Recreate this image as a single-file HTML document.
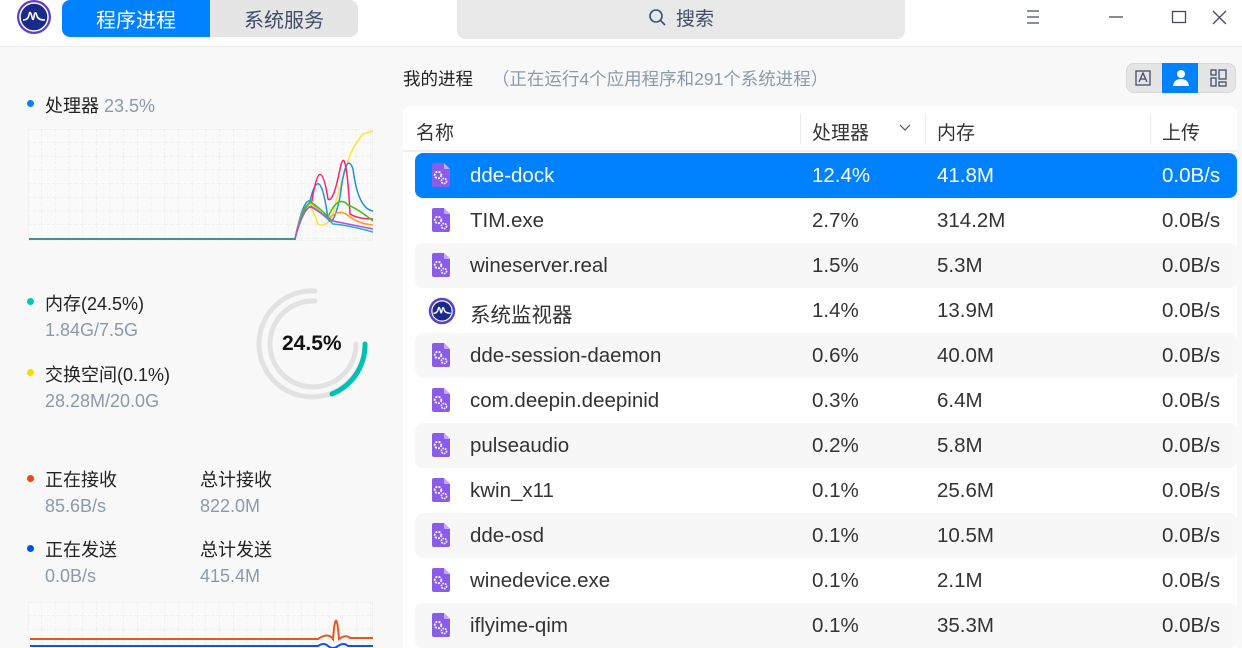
<!DOCTYPE html>
<html><head><meta charset="utf-8"><style>
*{margin:0;padding:0;box-sizing:border-box}
body{width:1242px;height:648px;overflow:hidden;background:#f8f8f8;font-family:"Liberation Sans","Noto Sans CJK SC",sans-serif;position:relative;color:#2a2a2a}
.abs{position:absolute}
.title{left:0;top:0;width:1242px;height:47px;background:#fff;border-bottom:1px solid #eaeaea}
.tab{top:0;height:37px;font-size:20px;display:flex;align-items:center;justify-content:center}
.dot{width:7px;height:7px;border-radius:50%;position:absolute}
.lbl{font-size:18px;color:#222}
.sub{font-size:18px;color:#8a9aab}
.row{position:absolute;left:415px;width:822px;height:45px;font-size:20.5px;color:#333}
.row span{position:absolute;top:11px}
.row.g{background:#f7f7f7;border-radius:8px}
.row.sel{background:#0081ff;color:#fff;border-radius:8px}
.ic{position:absolute;left:15px;top:10px}
</style></head><body>
<div class="abs title"></div>
<svg class="abs" style="left:16px;top:0" width="36" height="36" viewBox="0 0 36 36"><circle cx="18" cy="17" r="17" fill="#5a3fcf"/><circle cx="18" cy="17" r="14" fill="#1a2a8a" stroke="#fff" stroke-width="1.5"/><path d="M7 20 Q12 20 13 15 Q14 9 16 17 Q17 22 18 17 Q19 9 21 16 Q22 20 29 20" stroke="#fff" stroke-width="1.6" fill="none"/></svg>
<div class="abs tab" style="left:62px;width:148px;background:#0081ff;color:#fff;border-radius:8px 0 0 8px">程序进程</div>
<div class="abs tab" style="left:210px;width:148px;background:#e5e5e5;color:#414d68;border-radius:0 8px 8px 0">系统服务</div>
<div class="abs" style="left:457px;top:0;width:448px;height:39px;background:#e8e8e8;border-radius:0 0 8px 8px;display:flex;align-items:center;justify-content:center;font-size:19px;color:#414d68;padding-bottom:4px">
<svg width="20" height="20" viewBox="0 0 20 20" style="margin-right:8px"><circle cx="8" cy="8" r="6" stroke="#414d68" stroke-width="1.6" fill="none"/><path d="M12.5 12.5L17 17" stroke="#414d68" stroke-width="1.6"/></svg>搜索</div>
<svg class="abs" style="left:1020px;top:8px" width="220" height="20"><g stroke="#414d68" stroke-width="1.3" fill="none"><path d="M7 3h12M7 9h12M7 15h12"/><path d="M89 9h14"/><rect x="152.5" y="3.5" width="13" height="11"/><path d="M193 3l13 13M206 3l-13 13"/></g></svg>

<!-- left panel -->
<div class="dot" style="left:27px;top:100px;background:#0081ff"></div>
<div class="abs lbl" style="left:45px;top:92px">处理器 <span style="color:#8a9aab">23.5%</span></div>
<svg class="abs" style="left:28px;top:129px" width="345" height="112">
<defs><pattern id="gp" width="13.7" height="13.7" patternUnits="userSpaceOnUse"><path d="M13.7 0V13.7M0 13.7H13.7" stroke="#e6e6e6" stroke-dasharray="3 2" fill="none"/></pattern></defs>
<rect width="345" height="112" fill="#fafafa" stroke="#eaeaea"/><rect width="345" height="112" fill="url(#gp)"/>
<g fill="none" stroke-width="1.5">
<path d="M1 110H267Q272 90 276 80Q282 70 290 95Q298 100 305 85Q312 55 318 40Q322 20 335 5L345 2" stroke="#ffe52a"/>
<path d="M1 110H267Q275 70 282 72Q292 30 300 90Q305 100 312 68Q318 20 325 40Q330 80 345 82" stroke="#1e90e0"/>
<path d="M1 110H267Q273 80 284 72Q292 20 300 70Q305 75 312 40Q318 10 322 85Q330 90 345 90" stroke="#ff1e6e"/>
<path d="M1 110H267Q275 72 284 75Q295 85 300 90Q310 80 318 85Q330 95 345 96" stroke="#ff9e1e"/>
<path d="M1 110H267Q275 75 283 73Q293 80 300 88Q310 65 320 76Q330 80 345 92" stroke="#40c020"/>
<path d="M1 110H267Q275 80 283 77Q295 85 305 95Q320 96 345 103" stroke="#1eb0c0"/>
<path d="M1 110H267Q275 78 283 78Q295 85 305 92Q320 95 345 100" stroke="#b050e0"/>
<path d="M1 110H267" stroke="#2a9a8a"/>
</g></svg>

<div class="dot" style="left:27px;top:298px;background:#00c8b4"></div>
<div class="abs lbl" style="left:45px;top:290px">内存(24.5%)</div>
<div class="abs sub" style="left:45px;top:320px">1.84G/7.5G</div>
<div class="dot" style="left:27px;top:369px;background:#ffd800"></div>
<div class="abs lbl" style="left:45px;top:361px">交换空间(0.1%)</div>
<div class="abs sub" style="left:45px;top:391px">28.28M/20.0G</div>
<svg class="abs" style="left:250px;top:284px" width="125" height="120" viewBox="0 0 125 120">
<path d="M65 7 A53 53 0 1 0 115 60" fill="none" stroke="#e2e2e2" stroke-width="5" stroke-linecap="round"/>
<path d="M65 17 A43 43 0 1 0 106 60" fill="none" stroke="#e2e2e2" stroke-width="5" stroke-linecap="round"/>
<path d="M115 60 A53 53 0 0 1 82 110" fill="none" stroke="#00bfb3" stroke-width="5" stroke-linecap="round"/>
</svg>
<div class="abs" style="left:282px;top:332px;font-size:21px;font-weight:bold;color:#111">24.5%</div>

<div class="dot" style="left:27px;top:475px;background:#e84a10"></div>
<div class="abs lbl" style="left:45px;top:466px">正在接收</div>
<div class="abs sub" style="left:45px;top:496px">85.6B/s</div>
<div class="abs lbl" style="left:200px;top:466px">总计接收</div>
<div class="abs sub" style="left:200px;top:496px">822.0M</div>
<div class="dot" style="left:27px;top:545px;background:#0050f0"></div>
<div class="abs lbl" style="left:45px;top:536px">正在发送</div>
<div class="abs sub" style="left:45px;top:566px">0.0B/s</div>
<div class="abs lbl" style="left:200px;top:536px">总计发送</div>
<div class="abs sub" style="left:200px;top:566px">415.4M</div>
<svg class="abs" style="left:28px;top:602px" width="345" height="46">
<rect width="345" height="50" fill="#fafafa" stroke="#eaeaea"/><rect width="345" height="50" fill="url(#gp)"/>
<path d="M2 37H290Q300 30 305 37Q308 0 311 37Q318 32 322 36H345" stroke="#e8571e" stroke-width="2" fill="none"/>
<path d="M2 44H290Q296 40 300 44Q305 48 310 44Q316 40 320 44H345" stroke="#1050f0" stroke-width="2" fill="none"/>
</svg>

<!-- right -->
<div class="abs" style="left:403px;top:66px;font-size:17.5px;color:#222">我的进程 <span style="color:#8a9aab;margin-left:14px">（正在运行4个应用程序和291个系统进程）</span></div>
<div class="abs" style="left:1126px;top:63px;width:110px;height:30px;background:#e5e5e5;border-radius:8px;border:1px solid #d8d8d8"></div>
<div class="abs" style="left:1162px;top:63px;width:36px;height:30px;background:#0081ff"></div>
<svg class="abs" style="left:1126px;top:63px" width="110" height="30"><g fill="none" stroke="#414d68" stroke-width="1.3"><rect x="10" y="8" width="14" height="14"/><path d="M13 19l4-9 4 9M14.5 16h5"/><rect x="85" y="7" width="5" height="5"/><rect x="85" y="15" width="5" height="8"/><rect x="93" y="7" width="7" height="9"/><rect x="93" y="19" width="7" height="4"/></g><circle cx="55" cy="11" r="4" fill="#fff"/><path d="M47 23Q48 16 55 16Q62 16 63 23Z" fill="#fff"/></svg>

<div class="abs" style="left:403px;top:106px;width:834px;height:542px;background:#fff;border-radius:8px 8px 0 0"></div>
<div class="abs" style="left:403px;top:106px;width:834px;height:46px;border-bottom:2px solid #eef0f2;font-size:19px;color:#333">
<span class="abs" style="left:13px;top:12px">名称</span>
<span class="abs" style="left:397px;top:8px;height:30px;border-left:1px solid #eaeaea"></span>
<span class="abs" style="left:409px;top:12px">处理器</span>
<svg class="abs" style="left:496px;top:18px" width="12" height="8"><path d="M1 1l5 5 5-5" stroke="#555" fill="none" stroke-width="1.2"/></svg>
<span class="abs" style="left:522px;top:8px;height:30px;border-left:1px solid #eaeaea"></span>
<span class="abs" style="left:534px;top:12px">内存</span>
<span class="abs" style="left:747px;top:8px;height:30px;border-left:1px solid #eaeaea"></span>
<span class="abs" style="left:759px;top:12px">上传</span>
</div>

<svg width="0" height="0" style="position:absolute"><defs><g id="gi"><path d="M2 2Q2 0 4 0H14L20 6V22Q20 24 18 24H4Q2 24 2 22Z" fill="#8a5ce8"/><path d="M14 0L20 6H15Q14 6 14 5Z" fill="#c5a8ff"/><circle cx="8" cy="12" r="3.3" fill="none" stroke="#fff" stroke-width="1.8" stroke-dasharray="2 1.2"/><circle cx="14" cy="18" r="2.6" fill="none" stroke="#fff" stroke-width="1.6" stroke-dasharray="1.6 1"/></g></defs></svg>

<div class="row sel" style="top:153px"><svg class="ic" width="22" height="26"><use href="#gi"/></svg><span style="left:55px">dde-dock</span><span style="left:397px">12.4%</span><span style="left:522px">41.8M</span><span style="left:747px">0.0B/s</span></div>
<div class="row" style="top:198px"><svg class="ic" width="22" height="26"><use href="#gi"/></svg><span style="left:55px">TIM.exe</span><span style="left:397px">2.7%</span><span style="left:522px">314.2M</span><span style="left:747px">0.0B/s</span></div>
<div class="row g" style="top:243px"><svg class="ic" width="22" height="26"><use href="#gi"/></svg><span style="left:55px">wineserver.real</span><span style="left:397px">1.5%</span><span style="left:522px">5.3M</span><span style="left:747px">0.0B/s</span></div>
<div class="row" style="top:288px"><svg class="ic" style="left:13px;top:9px" width="28" height="28" viewBox="0 0 36 36"><circle cx="18" cy="18" r="17" fill="#5a3fcf"/><circle cx="18" cy="18" r="13" fill="#1a2a8a" stroke="#fff" stroke-width="1.5"/><path d="M7 21Q12 21 13 16Q14 10 16 18Q17 23 18 18Q19 10 21 17Q22 21 29 21" stroke="#fff" stroke-width="1.8" fill="none"/></svg><span style="left:55px;top:10px">系统监视器</span><span style="left:397px">1.4%</span><span style="left:522px">13.9M</span><span style="left:747px">0.0B/s</span></div>
<div class="row g" style="top:333px"><svg class="ic" width="22" height="26"><use href="#gi"/></svg><span style="left:55px">dde-session-daemon</span><span style="left:397px">0.6%</span><span style="left:522px">40.0M</span><span style="left:747px">0.0B/s</span></div>
<div class="row" style="top:378px"><svg class="ic" width="22" height="26"><use href="#gi"/></svg><span style="left:55px">com.deepin.deepinid</span><span style="left:397px">0.3%</span><span style="left:522px">6.4M</span><span style="left:747px">0.0B/s</span></div>
<div class="row g" style="top:423px"><svg class="ic" width="22" height="26"><use href="#gi"/></svg><span style="left:55px">pulseaudio</span><span style="left:397px">0.2%</span><span style="left:522px">5.8M</span><span style="left:747px">0.0B/s</span></div>
<div class="row" style="top:468px"><svg class="ic" width="22" height="26"><use href="#gi"/></svg><span style="left:55px">kwin_x11</span><span style="left:397px">0.1%</span><span style="left:522px">25.6M</span><span style="left:747px">0.0B/s</span></div>
<div class="row g" style="top:513px"><svg class="ic" width="22" height="26"><use href="#gi"/></svg><span style="left:55px">dde-osd</span><span style="left:397px">0.1%</span><span style="left:522px">10.5M</span><span style="left:747px">0.0B/s</span></div>
<div class="row" style="top:558px"><svg class="ic" width="22" height="26"><use href="#gi"/></svg><span style="left:55px">winedevice.exe</span><span style="left:397px">0.1%</span><span style="left:522px">2.1M</span><span style="left:747px">0.0B/s</span></div>
<div class="row g" style="top:603px"><svg class="ic" width="22" height="26"><use href="#gi"/></svg><span style="left:55px">iflyime-qim</span><span style="left:397px">0.1%</span><span style="left:522px">35.3M</span><span style="left:747px">0.0B/s</span></div>
</body></html>
